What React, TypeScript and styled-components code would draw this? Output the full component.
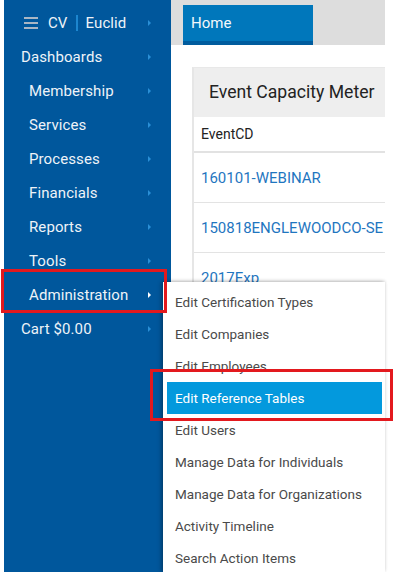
import React from "react";
import styled, { createGlobalStyle } from "styled-components";

const GlobalStyle = createGlobalStyle`
  html, body {
    margin: 0;
    padding: 0;
    background: #ffffff;
    font-family: Roboto, "Liberation Sans", Arial, sans-serif;
  }
  * {
    box-sizing: border-box;
  }
`;

const Page = styled.div`
  position: relative;
  display: flex;
  width: 395px;
  height: 572px;
  padding-left: 4px;
  overflow: hidden;
  background: #ffffff;
`;

const Sidebar = styled.nav`
  width: 167px;
  flex-shrink: 0;
  background: #00579c;
  padding-top: 6px;
`;

const NavRow = styled.div<{ $indent?: boolean }>`
  display: flex;
  align-items: center;
  height: 34px;
  padding-left: ${(p) => (p.$indent ? "25px" : "17px")};
  padding-right: 20px;
  color: #eef3f8;
  font-size: 15px;
  letter-spacing: 0.1px;
`;

const NavLabel = styled.span`
  flex: 1;
`;

const Brand = styled.span`
  display: flex;
  align-items: center;
  gap: 7px;
  flex: 1;
  padding-left: 3px;
`;

const BrandText = styled.span<{ $gap?: number }>`
  margin-left: ${(p) => p.$gap ?? 0}px;
`;

const BrandDivider = styled.span`
  width: 2px;
  height: 16px;
  background: #1d86cf;
  margin: 0 1px;
`;

const Caret = styled.span<{ $active?: boolean }>`
  width: 0;
  height: 0;
  border-top: 3px solid transparent;
  border-bottom: 3px solid transparent;
  border-left: 3px solid ${(p) => (p.$active ? "#ffffff" : "#2a8fd6")};
`;

const Main = styled.main`
  flex: 1;
  min-width: 0;
  overflow: hidden;
  margin-right: 10px;
`;

const TopBar = styled.div`
  height: 45px;
  background: #dddddd;
  padding: 5px 0 0 12px;
`;

const HomeTab = styled.div`
  width: 130px;
  height: 40px;
  background: #0077bb;
  border-bottom: 4px solid #005c9e;
  color: #f4f8fb;
  font-size: 15px;
  padding: 9px 0 0 8px;
`;

const Content = styled.div`
  padding: 22px 0 0 21px;
`;

const Card = styled.div`
  border-left: 2px solid #e6e6e6;
  border-top: 1px solid #e8e8e8;
`;

const CardHeader = styled.div`
  height: 49px;
  background: #eeeeee;
  color: #222222;
  font-size: 17.6px;
  padding: 14px 0 0 15px;
  white-space: nowrap;
`;

const HeadRow = styled.div`
  height: 36px;
  border-bottom: 2px solid #e2e2e2;
  font-size: 14px;
  color: #222222;
  padding: 9px 0 0 7px;
`;

const DataRow = styled.div`
  height: 50px;
  border-bottom: 1px solid #e3e3e3;
  display: flex;
  align-items: center;
  padding-left: 7px;
  font-size: 15px;
  color: #1f76bf;
  white-space: nowrap;
  overflow: hidden;
`;

const Dropdown = styled.div`
  position: absolute;
  left: 163px;
  top: 282px;
  width: 222px;
  bottom: 0;
  background: #ffffff;
  box-shadow: -2px 0 4px rgba(0, 0, 0, 0.25), 0 -1px 3px rgba(0, 0, 0, 0.15);
  padding-top: 4px;
`;

const MenuItem = styled.div<{ $active?: boolean }>`
  height: 32px;
  margin: 0 3px 0 4px;
  display: flex;
  align-items: center;
  padding-left: 8px;
  font-size: 13.5px;
  color: ${(p) => (p.$active ? "#ffffff" : "#4a4a4a")};
  background: ${(p) => (p.$active ? "#0399dd" : "transparent")};
  white-space: nowrap;
`;

const Highlight = styled.div<{ $x: number; $y: number; $w: number; $h: number }>`
  position: absolute;
  left: ${(p) => p.$x}px;
  top: ${(p) => p.$y}px;
  width: ${(p) => p.$w}px;
  height: ${(p) => p.$h}px;
  border: 3px solid #e3191e;
  pointer-events: none;
`;

function Hamburger() {
  return (
    <svg width="14" height="12" viewBox="0 0 14 12">
      <rect x="0" y="0" width="14" height="2" fill="#a9b6c4" />
      <rect x="0" y="5" width="14" height="2" fill="#a9b6c4" />
      <rect x="0" y="10" width="14" height="2" fill="#a9b6c4" />
    </svg>
  );
}

const navItems = [
  { label: "Dashboards", indent: false },
  { label: "Membership", indent: true },
  { label: "Services", indent: true },
  { label: "Processes", indent: true },
  { label: "Financials", indent: true },
  { label: "Reports", indent: true },
  { label: "Tools", indent: true },
  { label: "Administration", indent: true, active: true },
  { label: "Cart $0.00", indent: false },
];

const events = ["160101-WEBINAR", "150818ENGLEWOODCO-SE", "2017Exp"];

const adminItems = [
  "Edit Certification Types",
  "Edit Companies",
  "Edit Employees",
  "Edit Reference Tables",
  "Edit Users",
  "Manage Data for Individuals",
  "Manage Data for Organizations",
  "Activity Timeline",
  "Search Action Items",
];

export default function App() {
  return (
    <>
      <GlobalStyle />
      <Page>
        <Sidebar>
          <NavRow>
            <Brand>
              <Hamburger />
              <BrandText $gap={3}>CV</BrandText>
              <BrandDivider />
              <BrandText>Euclid</BrandText>
            </Brand>
            <Caret />
          </NavRow>
          {navItems.map((item) => (
            <NavRow key={item.label} $indent={item.indent}>
              <NavLabel>{item.label}</NavLabel>
              <Caret $active={item.active} />
            </NavRow>
          ))}
        </Sidebar>

        <Main>
          <TopBar>
            <HomeTab>Home</HomeTab>
          </TopBar>
          <Content>
            <Card>
              <CardHeader>Event Capacity Meter</CardHeader>
              <HeadRow>EventCD</HeadRow>
              {events.map((e) => (
                <DataRow key={e}>{e}</DataRow>
              ))}
            </Card>
          </Content>
        </Main>

        <Dropdown>
          {adminItems.map((item) => (
            <MenuItem key={item} $active={item === "Edit Reference Tables"}>
              {item}
            </MenuItem>
          ))}
        </Dropdown>

        <Highlight $x={1} $y={269} $w={166} $h={44} />
        <Highlight $x={150} $y={369} $w={243} $h={52} />
      </Page>
    </>
  );
}
